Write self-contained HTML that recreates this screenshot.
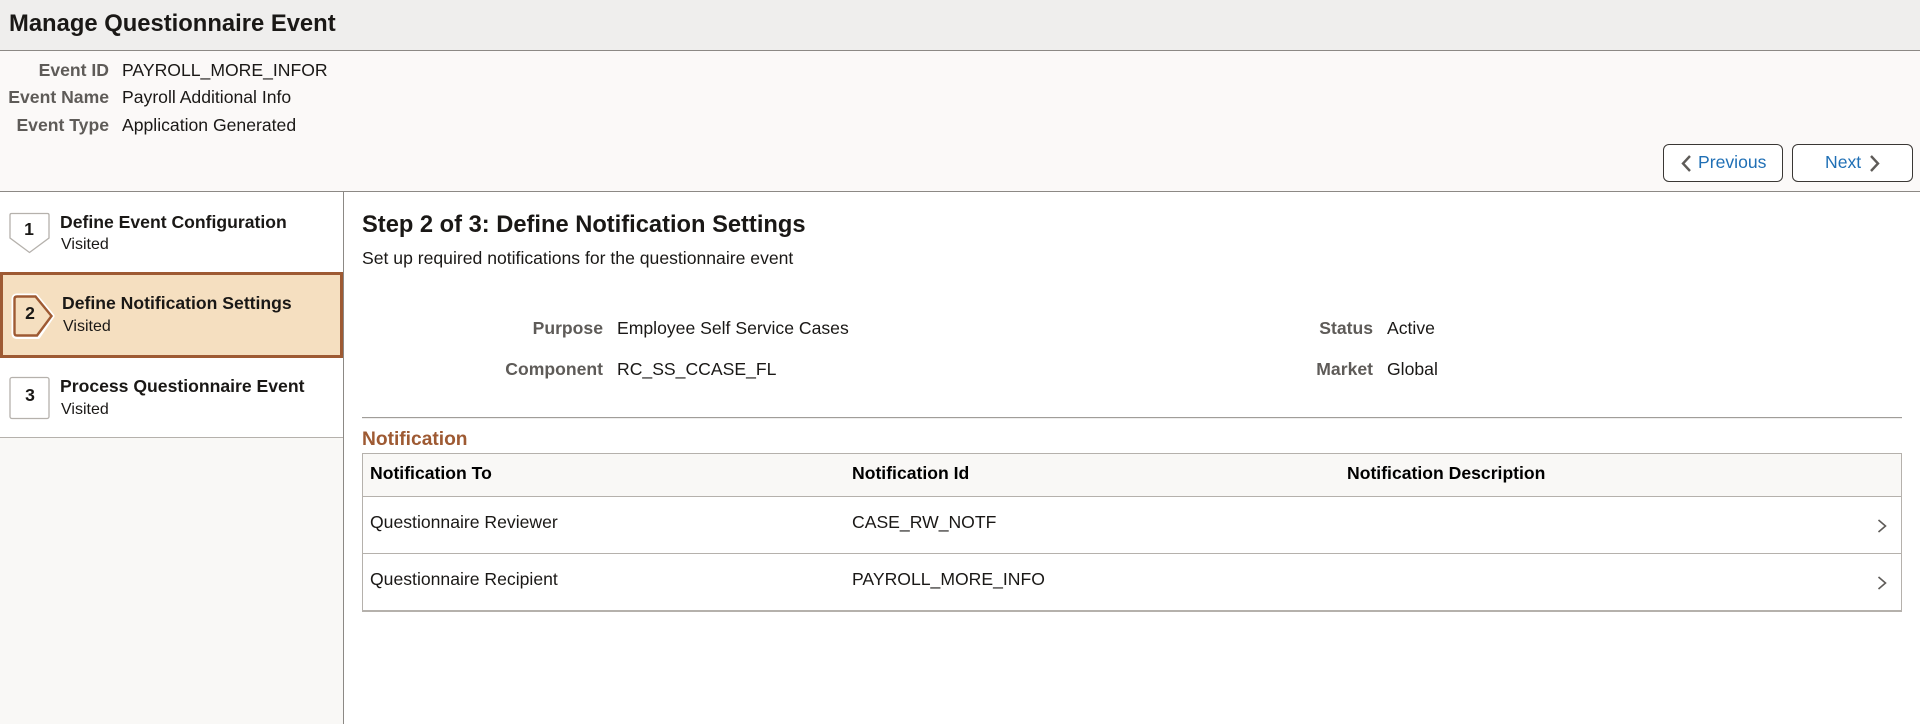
<!DOCTYPE html>
<html><head><meta charset="utf-8"><style>
html,body{margin:0;padding:0;width:1920px;height:724px;overflow:hidden;background:#fff}
body{font-family:"Liberation Sans",sans-serif;font-size:17.6px;color:#1a1816;position:relative}
.a{position:absolute}
.t{position:absolute;line-height:20px;height:20px;white-space:nowrap}
.r{text-align:right}
.c{text-align:center;width:30px}
.l{font-weight:bold;color:#5e5b58}
.b{font-weight:bold}
.h{font-weight:bold;color:#000}
svg{position:absolute;overflow:visible}
.btn{position:absolute;box-sizing:border-box;border:1px solid #3a3734;border-radius:6px;background:#fff;height:38px;top:144px}
</style></head><body>
<div class="a" style="left:0;top:0;width:1920px;height:50px;background:#efeeed;border-bottom:1px solid #8c8985"></div>
<div class="a" style="left:0;top:51px;width:1920px;height:140px;background:#fbf9f8;border-bottom:1px solid #8c8985"></div>
<div class="t b" style="left:9px;top:14px;font-size:23.8px">Manage Questionnaire Event</div>
<div class="t l r" style="left:0;width:109px;top:60px">Event ID</div>
<div class="t" style="left:122px;top:60px">PAYROLL_MORE_INFOR</div>
<div class="t l r" style="left:0;width:109px;top:87px">Event Name</div>
<div class="t" style="left:122px;top:87px">Payroll Additional Info</div>
<div class="t l r" style="left:0;width:109px;top:115px">Event Type</div>
<div class="t" style="left:122px;top:115px">Application Generated</div>

<div class="btn" style="left:1663px;width:120px"></div>
<div class="t" style="left:1698px;top:152px;color:#1f6fb5">Previous</div>
<div class="btn" style="left:1792px;width:121px"></div>
<div class="t" style="left:1825px;top:152px;color:#1f6fb5">Next</div>
<svg style="left:0;top:0" width="1920" height="724"><path d="M1690 156L1683 163.500L1690 171" fill="none" stroke="#5e5b58" stroke-width="2.400"/><path d="M1871 156L1878 163.500L1871 171" fill="none" stroke="#5e5b58" stroke-width="2.400"/></svg>

<div class="a" style="left:0;top:438px;width:343px;height:286px;background:#f9f8f6"></div>
<div class="a" style="left:343px;top:192px;width:1px;height:532px;background:#8c8985"></div>

<div class="a" style="left:0;top:272px;width:343px;height:86px;box-sizing:border-box;border:3px solid #9e5a33;background:#f5dfc0"></div>
<div class="a" style="left:0;top:437px;width:343px;height:1px;background:#b5b1ac"></div>

<svg style="left:0;top:0" width="343" height="440">
<path d="M11.500 213.500H47.500Q49 213.500 49 215V238L29.500 252.500L10 238V215Q10 213.500 11.500 213.500Z" fill="#fff" stroke="#b5b1ac" stroke-width="1.300"/>
<path d="M17 296H35.500L52 316L38 336.500H17Q14 336.500 14 333.500V299Q14 296 17 296Z" fill="#fff" stroke="#fff" stroke-width="5" stroke-linejoin="round"/>
<path d="M17 296.500H35.500L51.500 316L37 335.500H17Q14.500 335.500 14.500 333V299Q14.500 296.500 17 296.500Z" fill="#f5dfc0" stroke="#9e5a33" stroke-width="2.400"/>
<rect x="10" y="377.500" width="39" height="41" rx="2" fill="#fff" stroke="#b5b1ac" stroke-width="1.300"/>
</svg>
<div class="t b c" style="left:14px;top:219px">1</div>
<div class="t b c" style="left:15px;top:303px">2</div>
<div class="t b c" style="left:15px;top:385px">3</div>
<div class="t b" style="left:60px;top:212px">Define Event Configuration</div>
<div class="t" style="left:61px;top:235px;font-size:16px">Visited</div>
<div class="t b" style="left:62px;top:293px">Define Notification Settings</div>
<div class="t" style="left:63px;top:317px;font-size:16px">Visited</div>
<div class="t b" style="left:60px;top:376px">Process Questionnaire Event</div>
<div class="t" style="left:61px;top:400px;font-size:16px">Visited</div>

<div class="t b" style="left:362px;top:215px;font-size:23.700px">Step 2 of 3: Define Notification Settings</div>
<div class="t" style="left:362px;top:248px">Set up required notifications for the questionnaire event</div>
<div class="t l r" style="left:400px;width:203px;top:318px">Purpose</div>
<div class="t" style="left:617px;top:318px">Employee Self Service Cases</div>
<div class="t l r" style="left:400px;width:203px;top:359px">Component</div>
<div class="t" style="left:617px;top:359px">RC_SS_CCASE_FL</div>
<div class="t l r" style="left:1200px;width:173px;top:318px">Status</div>
<div class="t" style="left:1387px;top:318px">Active</div>
<div class="t l r" style="left:1200px;width:173px;top:359px">Market</div>
<div class="t" style="left:1387px;top:359px">Global</div>

<div class="a" style="left:362px;top:417px;width:1540px;height:1px;background:#a09d99"></div>
<div class="a" style="left:362px;top:418px;width:1540px;height:1px;background:#efeeed"></div>
<div class="t b" style="left:362px;top:430px;font-size:19.200px;color:#9e5a33">Notification</div>

<div class="a" style="left:362px;top:453px;width:1540px;height:159px;box-sizing:border-box;border:1px solid #b5b1ac;border-bottom:2px solid #b5b1ac;background:#fff"></div>
<div class="a" style="left:363px;top:454px;width:1538px;height:42px;background:#f9f8f6"></div>
<div class="a" style="left:363px;top:496px;width:1538px;height:1px;background:#b5b1ac"></div>
<div class="a" style="left:363px;top:553px;width:1538px;height:1px;background:#b5b1ac"></div>
<div class="t h" style="left:370px;top:463px">Notification To</div>
<div class="t h" style="left:852px;top:463px">Notification Id</div>
<div class="t h" style="left:1347px;top:463px">Notification Description</div>
<div class="t" style="left:370px;top:512px">Questionnaire Reviewer</div>
<div class="t" style="left:852px;top:512px">CASE_RW_NOTF</div>
<div class="t" style="left:370px;top:569px">Questionnaire Recipient</div>
<div class="t" style="left:852px;top:569px">PAYROLL_MORE_INFO</div>
<svg style="left:0;top:0" width="1920" height="724"><path d="M1878.500 520L1885.500 526L1878.500 532" fill="none" stroke="#5e5b58" stroke-width="1.600"/><path d="M1878.500 577L1885.500 583L1878.500 589" fill="none" stroke="#5e5b58" stroke-width="1.600"/></svg>
</body></html>
